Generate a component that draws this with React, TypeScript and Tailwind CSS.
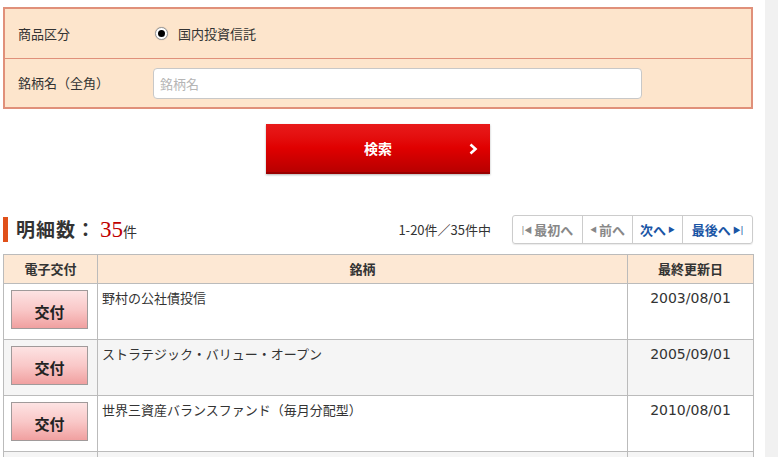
const font = { fontFamily: '"Noto Sans CJK JP", "Liberation Sans", sans-serif' };

const rows = [
  { name: "野村の公社債投信", date: "2003/08/01", button: true },
  { name: "ストラテジック・バリュー・オープン", date: "2005/09/01", button: true },
  { name: "世界三資産バランスファンド（毎月分配型）", date: "2010/08/01", button: true },
  { name: "", date: "", button: false },
];

function DeliverButton() {
  return (
    <button className="w-[77px] h-[39px] pt-[3px] border border-[#a09a9a] bg-gradient-to-b from-[#fde3e3] via-[#f9c8c8] to-[#f0a0a0] text-[15px] font-bold text-[#222] leading-none">
      交付
    </button>
  );
}

export default function App() {
  return (
    <div className="flex w-[778px] h-[457px] overflow-hidden bg-white text-[#333] text-[13px]" style={font}>
      <div className="w-[765px] shrink-0">
        {/* search form */}
        <div className="mt-[7px] ml-[3px] w-[750px] border-2 border-[#e0907a] bg-[#fde5cc]">
          <div className="flex items-center h-[50px] border-b border-[#e0907a]">
            <span className="w-[150px] pl-[13px]">商品区分</span>
            <span className="w-[13px] h-[13px] rounded-full bg-white border border-[#999] flex items-center justify-center shadow-[0_0_1px_rgba(0,0,0,0.3)]">
              <span className="w-[7px] h-[7px] rounded-full bg-black" />
            </span>
            <span className="ml-[10px]">国内投資信託</span>
          </div>
          <div className="flex items-center h-[48px]">
            <span className="w-[148px] pl-[13px]">銘柄名（全角）</span>
            <input
              className="w-[489px] h-[31px] rounded-[4px] border border-[#c8c8c8] bg-white px-[6px] text-[13px] placeholder:text-[#b5b5b5] outline-none"
              placeholder="銘柄名"
              style={font}
            />
          </div>
        </div>

        {/* search button */}
        <div className="flex justify-center mt-[15px] ml-[3px] w-[750px]">
          <button className="relative w-[224px] h-[50px] bg-gradient-to-b from-[#e81a1a] via-[#e00000] to-[#b80000] border-b-2 border-[#900] text-white text-[14px] font-bold shadow-[0_1px_2px_rgba(0,0,0,0.3)]">
            検索
            <svg className="absolute right-[12px] top-[19px]" width="9" height="12" viewBox="0 0 9 12">
              <path d="M1.5 1.5 L6.5 6 L1.5 10.5" stroke="white" strokeWidth="2.6" fill="none" />
            </svg>
          </button>
        </div>

        {/* count + pager */}
        <div className="flex items-center mt-[41px] ml-[3px] w-[750px] h-[29px]">
          <span className="w-[5px] h-[25px] bg-[#e0501a]" />
          <span className="ml-[8px] text-[19px] font-bold text-[#333] tracking-[1px]">明細数：</span>
          <span className="ml-[4px] text-[23px] text-[#c00000] leading-none" style={{ fontFamily: '"Liberation Serif", serif' }}>35</span>
          <span className="text-[14px] mt-[3px]">件</span>
          <span className="ml-auto mr-[21px] text-[13px]">1-20件／35件中</span>
          <div className="flex h-[29px] border border-[#ccc] rounded-[3px] text-[13px] font-bold shadow-[0_1px_1px_rgba(0,0,0,0.08)]">
            <span className="w-[70px] flex items-center justify-center gap-[2px] text-[#888] border-r border-[#ccc]">
              <span className="text-[8px]">|◀</span>最初へ
            </span>
            <span className="w-[50px] flex items-center justify-center gap-[2px] text-[#888] border-r border-[#ccc]">
              <span className="text-[7px]">◀</span>前へ
            </span>
            <span className="w-[50px] flex items-center justify-center gap-[2px] text-[#1a55a5] border-r border-[#ccc]">
              次へ<span className="text-[7px]">▶</span>
            </span>
            <span className="w-[69px] flex items-center justify-center gap-[2px] text-[#1a55a5]">
              最後へ<span className="text-[8px]">▶|</span>
            </span>
          </div>
        </div>

        {/* table */}
        <table className="mt-[10px] ml-[3px] w-[750px] border-collapse table-fixed">
          <colgroup>
            <col className="w-[94px]" />
            <col className="w-[530px]" />
            <col className="w-[126px]" />
          </colgroup>
          <thead>
            <tr className="h-[29px] bg-[#fde8d4] text-[13px] font-bold text-[#333]">
              <th className="border border-[#bbb] font-bold">電子交付</th>
              <th className="border border-[#bbb] font-bold">銘柄</th>
              <th className="border border-[#bbb] font-bold">最終更新日</th>
            </tr>
          </thead>
          <tbody>
            {rows.map((r, i) => (
              <tr key={i} className={i % 2 === 1 ? "h-[56px] bg-[#f5f5f5]" : "h-[56px] bg-white"}>
                <td className="border border-[#bbb] align-top pt-[6px] pl-[7px]">
                  {r.button && <DeliverButton />}
                </td>
                <td className="border border-[#bbb] align-top pt-[4px] pl-[4px] text-[13px] text-[#333]">{r.name}</td>
                <td className="border border-[#bbb] align-top pt-[4px] text-center text-[14px] text-[#333]" style={{ fontFamily: '"DejaVu Sans", sans-serif' }}>{r.date}</td>
              </tr>
            ))}
          </tbody>
        </table>
      </div>
      <div className="flex-1 bg-[#f1f1f1]" />
    </div>
  );
}
